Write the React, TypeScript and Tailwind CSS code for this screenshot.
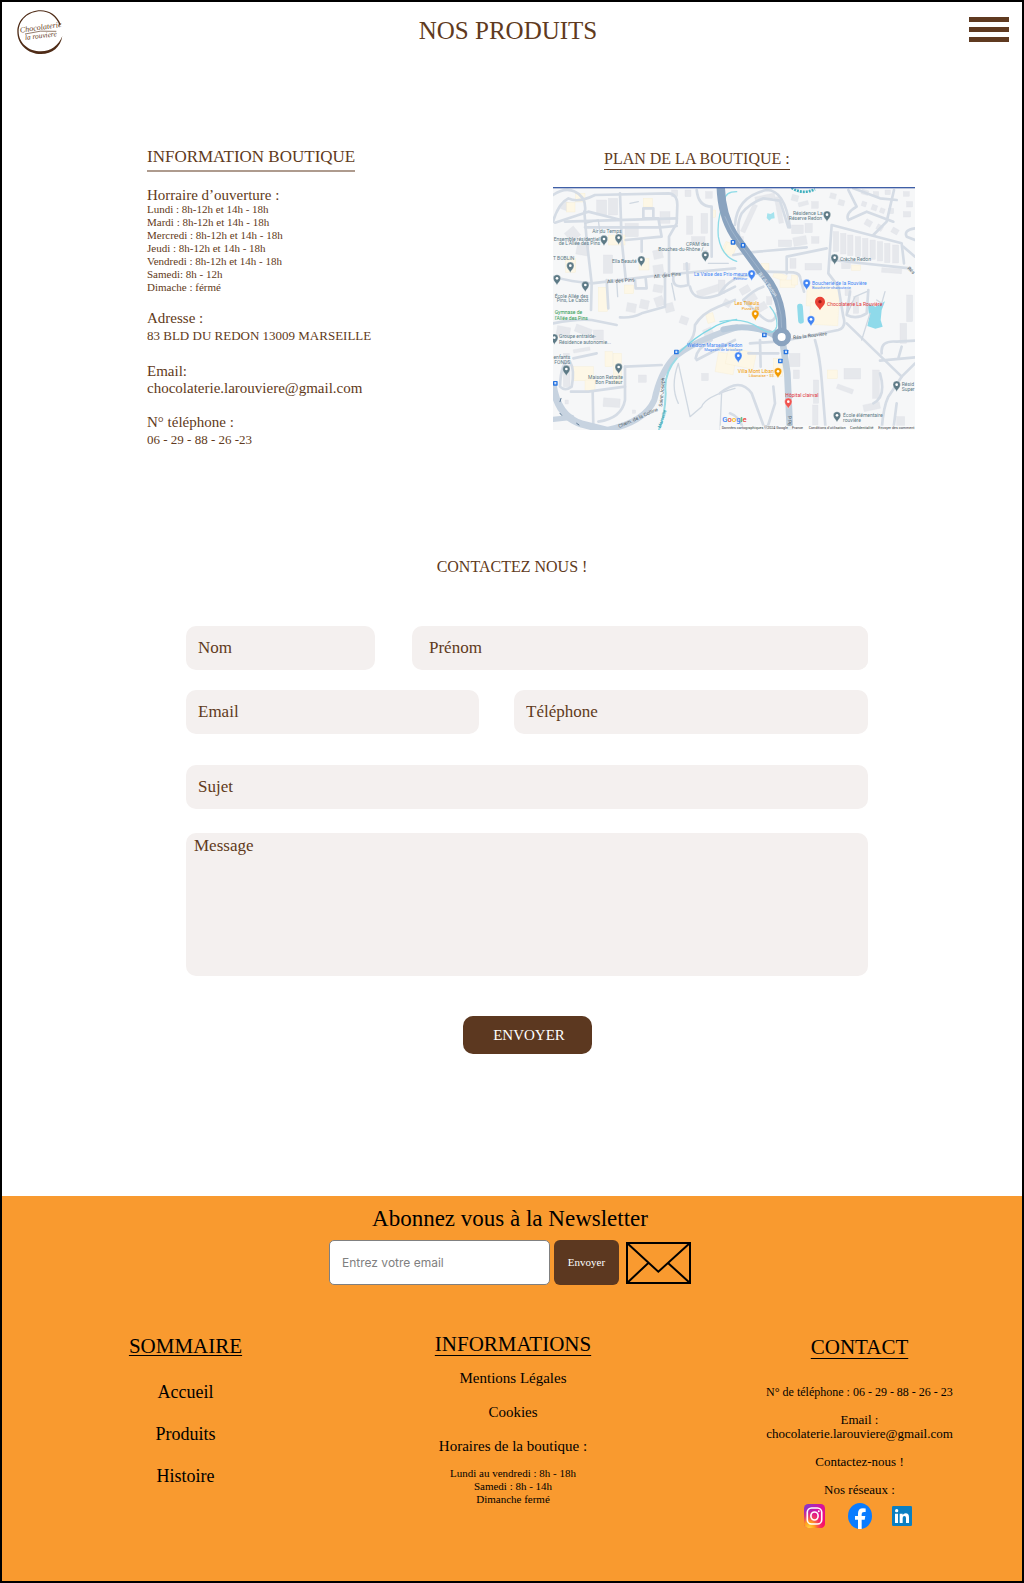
import React from 'react';

type Label = {
  x: number;
  y: number;
  t: string;
  c?: string;
  s?: number;
  a?: 'start' | 'middle' | 'end';
  r?: number;
};

type Box = [number, number, number, number, number?];

const GREY = '#5d7a86';
const BLUE = '#4285f4';
const ORANGE = '#f29900';
const RED = '#e0353a';
const ROAD = '#4d5b66';

const leftRoads = [
  'M24 245 Q40 190 70 175 Q100 190 150 165 L370 160 Q397 162 397 195 L395 250 L372 290 L372 400',
  'M24 165 Q60 140 90 155 Q125 170 120 215',
  'M30 248 L130 215 L228 240',
  'M118 215 L125 300 L140 430 L138 510',
  'M225 160 L230 300 L242 415',
  'M60 245 L395 235',
  'M120 262 L345 262 L395 258',
  'M242 300 L350 290 L340 235 L295 235 L295 205 L325 205 L325 235',
  'M290 300 L290 335',
  'M24 410 Q80 425 140 430 L350 405 Q460 395 570 385',
  'M185 420 L190 505',
  'M270 420 L272 445 L305 445 L302 415',
  'M360 400 L360 500 L290 520 Q260 535 225 532',
  'M24 550 Q100 535 140 540 L215 555',
  'M385 410 Q380 450 430 435 L425 370',
  'M455 150 Q460 200 500 200 L500 350',
  'M435 440 Q445 490 520 465 L570 440',
  'M430 610 Q450 590 450 555 Q470 520 520 500 L570 480',
  'M240 680 L350 675',
  'M240 680 L240 780 Q230 835 160 845',
  'M143 755 L145 860',
  'M78 755 L130 755 L240 740',
  'M80 740 Q90 690 75 665 Q48 660 45 740 Q60 755 80 740',
  'M85 655 L155 640',
  'M455 660 L570 600',
  'M452 655 Q455 625 500 600',
];

const leftThin = [
  'M400 670 Q375 740 400 790 M400 670 L435 830 L470 800 Q480 770 570 745',
  'M525 869 L530 755 M380 430 L390 480 M490 370 L550 370 M215 420 L218 470',
  'M255 190 L280 185 M120 250 L160 240 L165 280',
];

const rightRoads = [
  'M10 345 L60 337 L230 322',
  'M170 400 L170 350 L290 325',
  'M100 395 L190 397 Q212 400 212 420 L222 455',
  'M175 600 L325 570 Q350 562 340 530 L325 440 L295 400 L305 255 L515 310 L522 370',
  'M305 360 L540 385',
  'M520 320 L555 350',
  'M350 550 L515 710 L555 670',
  'M515 710 L475 770 Q460 800 455 869',
  'M255 600 Q270 650 275 720 L287 869',
  'M355 150 L380 200 Q345 220 355 240 L410 215 L490 245',
  'M492 150 L470 245 L430 285',
  'M370 145 L450 175 L500 180',
  'M15 255 Q20 170 110 150 Q165 150 180 262',
  'M45 335 Q10 270 35 220 Q60 190 100 175 L150 182 L175 262',
  'M100 440 Q70 450 40 480 L95 530 Q130 560 140 520',
  'M-30 460 Q0 410 60 405 L100 395',
  'M60 610 L140 605 M55 640 L145 640 M90 600 L92 680',
  'M-30 760 Q30 710 65 760 L105 869',
  'M0 820 Q30 830 40 869 M110 870 L135 790 L130 740',
  'M455 640 Q450 600 500 605 L555 602 M450 662 L555 652 M505 655 L515 620',
  'M360 455 L350 525 Q380 540 410 520 L415 450',
  'M555 265 Q520 270 530 290 L555 300',
  'M430 790 Q470 770 450 700 M500 790 L490 869',
];

const leftBuildings: Box[] = [
  [50, 185, 22, 25, 20], [155, 180, 30, 45], [190, 175, 28, 50], [65, 265, 35, 35, -40], [240, 250, 40, 40],
  [175, 345, 28, 55], [95, 310, 35, 35, 10], [325, 330, 28, 26, -12], [325, 375, 30, 26, -8], [425, 228, 18, 55],
  [468, 220, 20, 60], [440, 290, 40, 22], [380, 150, 18, 20], [420, 150, 18, 20], [482, 155, 20, 20],
  [245, 490, 28, 26, 10], [285, 480, 26, 26, 12], [330, 470, 26, 28, -20], [325, 435, 28, 22, 10], [360, 490, 26, 26, -15],
  [405, 530, 24, 22, 20], [475, 565, 28, 20, -25], [535, 480, 22, 20, 30], [35, 560, 40, 28, 10], [90, 560, 50, 22, 20],
  [145, 570, 30, 30], [85, 625, 50, 10, -10], [55, 675, 20, 65], [175, 775, 50, 26, 4], [280, 705, 24, 22],
  [345, 215, 30, 35], [470, 700, 20, 22], [55, 640, 18, 12], [455, 440, 85, 20, -18], [520, 420, 20, 40],
  [60, 780, 10, 12], [262, 810, 10, 10], [415, 370, 20, 20],
];

const leftShops: Box[] = [
  [92, 160, 28, 26], [65, 188, 25, 28], [295, 175, 27, 26], [190, 285, 50, 30], [62, 355, 30, 42], [282, 355, 30, 35],
  [160, 442, 28, 72], [238, 435, 28, 26], [180, 635, 22, 45], [205, 640, 24, 90], [85, 680, 60, 42], [120, 720, 30, 32],
  [485, 520, 22, 28, -15], [535, 310, 35, 30, 25], [515, 640, 55, 60, 10], [500, 210, 12, 22],
];

const rightBuildings: Box[] = [
  [185, 165, 20, 18, 15], [205, 185, 30, 12, -15], [245, 185, 20, 20], [185, 255, 35, 26], [225, 250, 22, 28], [145, 300, 40, 20],
  [190, 290, 40, 26, -10], [245, 290, 22, 20], [310, 275, 16, 60], [332, 280, 16, 62], [353, 285, 16, 62], [376, 290, 16, 60],
  [398, 295, 16, 60], [420, 300, 16, 58], [442, 305, 16, 58], [464, 310, 16, 58], [488, 315, 18, 54],
  [300, 160, 18, 16, 15], [325, 180, 18, 16, 15], [395, 150, 20, 14, 15], [430, 155, 16, 14], [465, 150, 16, 14], [520, 155, 18, 14],
  [395, 185, 14, 14, 20], [425, 195, 16, 16, 20], [450, 205, 14, 14, 20], [405, 240, 20, 18, 30], [440, 255, 18, 16, 30],
  [485, 265, 20, 16, 30], [520, 215, 22, 16], [530, 185, 18, 16], [475, 205, 16, 16], [70, 370, 20, 22], [30, 440, 30, 20, -30],
  [50, 465, 30, 20, -30], [80, 490, 30, 22, -30], [110, 470, 16, 24], [225, 370, 50, 20], [180, 355, 18, 30], [345, 445, 18, 22],
  [370, 470, 16, 50], [178, 640, 32, 40], [190, 690, 18, 26], [250, 720, 16, 70], [248, 795, 16, 60], [342, 685, 50, 32],
  [320, 740, 50, 14, 20], [428, 690, 20, 85], [400, 790, 50, 20, -12], [530, 465, 18, 80], [510, 550, 20, 60], [335, 370, 26, 16],
  [500, 830, 24, 30], [455, 385, 60, 14, 4], [20, 290, 20, 30], [50, 190, 14, 90, 25], [75, 165, 60, 14, -12], [140, 170, 14, 80, -10],
];

const rightShops: Box[] = [
  [230, 440, 98, 60, 3], [240, 490, 85, 65, 3], [130, 400, 40, 18, 20], [150, 420, 45, 22], [185, 405, 18, 30],
  [365, 375, 27, 16], [95, 370, 22, 20], [130, 655, 28, 55], [292, 690, 30, 26], [-10, 630, 85, 50, 12], [-15, 310, 30, 35, 20],
];

const leftPins: [number, number, string][] = [
  [177, 300, GREY], [221, 296, GREY], [76, 380, GREY], [289, 362, GREY], [481, 348, GREY], [36, 418, GREY],
  [121, 438, GREY], [28, 596, GREY], [64, 690, GREY], [221, 684, GREY],
];
const rightPins: [number, number, string][] = [
  [291, 227, GREY], [314, 356, GREY], [500, 737, GREY], [321, 829, GREY], [65, 404, BLUE], [230, 432, BLUE],
  [243, 541, BLUE], [25, 650, BLUE], [76, 524, ORANGE], [144, 697, ORANGE], [175, 788, '#f0534f'],
];

const leftStops: [number, number][] = [[394, 636], [31, 730]];
const rightStops: [number, number][] = [[9, 307], [39, 316], [103, 585], [168, 636], [151, 663]];

const leftLabels: Label[] = [
  { x: 186, y: 279, t: 'Air du Temps', a: 'middle' },
  { x: 26, y: 302, t: 'Ensemble résidentiel' },
  { x: 165, y: 316, t: 'de L’Allée des Pins', a: 'end' },
  { x: 88, y: 361, t: 'T BOBLIN', a: 'end' },
  { x: 275, y: 369, t: 'Ella Beauté', a: 'end' },
  { x: 492, y: 318, t: 'CPAM des', a: 'end' },
  { x: 487, y: 332, t: 'Bouches-du-Rhône /...', a: 'end' },
  { x: 29, y: 473, t: 'École Allée des' },
  { x: 35, y: 487, t: 'Pins, Le Cabot' },
  { x: 29, y: 522, t: 'Gymnase de', c: '#2e9b4f' },
  { x: 29, y: 539, t: 'l’Allée des Pins', c: '#2e9b4f' },
  { x: 42, y: 595, t: 'Groupe entraide-' },
  { x: 42, y: 611, t: 'Résidence autonomie...' },
  { x: 76, y: 658, t: 'enfants', a: 'end' },
  { x: 76, y: 672, t: 'FONDS', a: 'end' },
  { x: 234, y: 718, t: 'Maison Retraite', a: 'end' },
  { x: 232, y: 732, t: 'Bon Pasteur', a: 'end' },
  { x: 187, y: 430, t: 'All. des Pins', c: ROAD, r: -4 },
  { x: 327, y: 415, t: 'All. des Pins', c: ROAD, r: -6 },
  { x: 223, y: 864, t: 'Chem. de la Colline', c: ROAD, r: -24 },
  { x: 352, y: 800, t: 'Saint-Joseph', c: ROAD, r: -85 },
  { x: 347, y: 865, t: 'Marseille', c: '#2499ab', r: -72, s: 14 },
];

const rightLabels: Label[] = [
  { x: 52, y: 408, t: 'La Valse des Prix-meurs', c: BLUE, a: 'end' },
  { x: 52, y: 421, t: 'Primeur', c: BLUE, a: 'end', s: 12 },
  { x: 278, y: 226, t: 'Résidence La', a: 'end' },
  { x: 276, y: 241, t: 'Réserve Redon', a: 'end' },
  { x: 330, y: 363, t: 'Crèche Redon' },
  { x: 246, y: 434, t: 'Boucherie de la Rouvière', c: BLUE },
  { x: 246, y: 447, t: 'Boucherie-charcuterie', c: BLUE, s: 12 },
  { x: 291, y: 498, t: 'Chocolaterie La Rouvière', c: RED },
  { x: 88, y: 496, t: 'Les Tilleuls', c: ORANGE, a: 'end' },
  { x: 88, y: 509, t: 'Pizza • $$', c: ORANGE, a: 'end', s: 12 },
  { x: 37, y: 620, t: 'Weldom Marseille Redon', c: BLUE, a: 'end' },
  { x: 37, y: 632, t: 'Magasin de bricolage', c: BLUE, a: 'end', s: 12 },
  { x: 131, y: 700, t: 'Villa Mont Liban', c: ORANGE, a: 'end' },
  { x: 131, y: 712, t: 'Libanaise • $$', c: ORANGE, a: 'end', s: 12 },
  { x: 166, y: 771, t: 'Hôpital clairval', c: RED },
  { x: 339, y: 830, t: 'École élémentaire' },
  { x: 339, y: 845, t: 'rouvière' },
  { x: 515, y: 739, t: 'Résid' },
  { x: 515, y: 752, t: 'Super' },
  { x: 190, y: 598, t: 'Rés la Rouvière', c: ROAD, r: -7 },
  { x: 84, y: 402, t: 'Bd du Redon', c: '#eef3f8', r: 54 },
  { x: 184, y: 858, t: 'Bd d', c: ROAD, r: -88 },
  { x: 531, y: 386, t: 'Rés', c: ROAD, r: 44 },
];

function Boxes({ items, fill, stroke }: { items: Box[]; fill: string; stroke: string }) {
  return (
    <g fill={fill} stroke={stroke} strokeWidth="1">
      {items.map(([x, y, w, h, r], i) => (
        <rect key={i} x={x} y={y} width={w} height={h} transform={r ? `rotate(${r} ${x + w / 2} ${y + h / 2})` : undefined} />
      ))}
    </g>
  );
}

function Pins({ items }: { items: [number, number, string][] }) {
  return (
    <>
      {items.map(([x, y, c], i) => (
        <g key={i} transform={`translate(${x} ${y})`}>
          <path d="M0 18 C-2 11 -11 6 -11 -3 A11 11 0 0 1 11 -3 C11 6 2 11 0 18Z" fill={c} stroke="#fff" strokeWidth="1" />
          <circle cy="-3" r="4" fill="#fff" />
        </g>
      ))}
    </>
  );
}

function Stops({ items }: { items: [number, number][] }) {
  return (
    <>
      {items.map(([x, y], i) => (
        <g key={i}>
          <rect x={x - 7} y={y - 7} width="14" height="14" rx="2" fill="#2573e0" />
          <rect x={x - 3} y={y - 4} width="6" height="7" fill="#cfe1fb" />
        </g>
      ))}
    </>
  );
}

function Labels({ items }: { items: Label[] }) {
  return (
    <>
      {items.map((l) => (
        <text
          key={`${l.t}-${l.x}`}
          x={l.x}
          y={l.y}
          fontSize={l.s ?? 15}
          fill={l.c ?? GREY}
          textAnchor={l.a ?? 'start'}
          transform={l.r ? `rotate(${l.r} ${l.x} ${l.y})` : undefined}
        >
          {l.t}
        </text>
      ))}
    </>
  );
}

function ShopMap() {
  return (
    <svg viewBox="0 0 1086 729" className="mt-[17px] block h-auto w-full" fontFamily="Roboto, sans-serif" role="img" aria-label="Plan de la boutique">
      <rect width="1086" height="729" fill="#f6f7f8" />
      <g transform="translate(-24 -141)">
        <Boxes items={leftBuildings} fill="#e6e8ec" stroke="#dfe2e8" />
        <Boxes items={leftShops} fill="#fdf7e6" stroke="#f6ecd0" />
      </g>
      <g transform="translate(531 -141)">
        <Boxes items={rightBuildings} fill="#e6e8ec" stroke="#dfe2e8" />
        <Boxes items={rightShops} fill="#fdf7e6" stroke="#f6ecd0" />
        <path d="M112 220 L122 222 L132 216 L134 235 L124 236 L118 242 L110 234Z" fill="#a5e3ee" />
        <path d="M412 490 L436 500 L465 484 L455 510 L452 540 L458 560 L436 566 L412 558 L418 530Z" fill="#8fdaea" />
        <rect x="203" y="491" width="17" height="60" rx="8" fill="#8fdaea" transform="rotate(-4 211 521)" />
        <path d="M185 143 Q215 165 255 148" fill="none" stroke="#3fb0bf" strokeWidth="8" strokeDasharray="6 3" />
      </g>
      <g transform="translate(-24 -141)" fill="none" strokeLinecap="round" strokeLinejoin="round">
        {leftRoads.map((d) => (
          <path key={d} d={d} stroke="#d5dce5" strokeWidth="8" />
        ))}
        {leftThin.map((d) => (
          <path key={d} d={d} stroke="#d0d8e1" strokeWidth="4" />
        ))}
      </g>
      <g transform="translate(531 -141)" fill="none" strokeLinecap="round" strokeLinejoin="round">
        {rightRoads.map((d) => (
          <path key={d} d={d} stroke="#d5dce5" strokeWidth="8" />
        ))}
        <path d="M350 525 L375 470 L410 455 M465 455 L455 490 L440 480 M420 520 L395 600" stroke="#d0d8e1" strokeWidth="4" />
      </g>
      <g transform="translate(-24 -141)" fill="none" strokeLinecap="round" strokeLinejoin="round">
        <path d="M24 735 Q38 830 110 852 L200 875" stroke="#c7d3e0" strokeWidth="22" />
        <path d="M24 838 L80 832" stroke="#c7d3e0" strokeWidth="16" />
        <path d="M190 869 Q300 845 328 780 Q345 700 385 655 Q440 605 575 562" stroke="#c7d3e0" strokeWidth="18" />
        <path d="M395 655 Q355 700 362 760 Q360 830 342 869" stroke="#9adbe5" strokeWidth="6" />
        <path d="M400 640 Q450 590 500 565 Q530 545 575 538" stroke="#7dd6e4" strokeWidth="4" />
        <path d="M575 155 Q540 155 540 180 Q515 230 520 290 Q530 350 575 364" stroke="#8edbe7" strokeWidth="4" />
        <path d="M45 785 L48 775 M45 820 L50 826 M95 850 L102 855" stroke="#5d7a96" strokeWidth="3" />
      </g>
      <g transform="translate(531 -141)" fill="none" strokeLinecap="round" strokeLinejoin="round">
        <path d="M-20 568 Q70 548 140 590" stroke="#b9cadb" strokeWidth="18" />
        <path d="M-30 545 Q40 530 90 565 Q130 590 140 560 Q145 530 120 500" stroke="#8edbe7" strokeWidth="4" />
        <path d="M157 600 L172 700 L180 875" stroke="#c0cfdd" strokeWidth="20" />
        <path d="M-28 136 Q-26 225 12 285 L90 392 Q165 470 156 590" stroke="#8aa3bf" strokeWidth="25" />
        <path d="M-15 230 Q0 270 30 310 L100 405 Q158 480 155 565" stroke="#a9bdd2" strokeWidth="2" />
        <circle cx="155" cy="591" r="20" fill="#fff" stroke="#8aa3bf" strokeWidth="16" />
      </g>
      <g transform="translate(-24 -141)">
        <Stops items={leftStops} />
        <Pins items={leftPins} />
        <Labels items={leftLabels} />
      </g>
      <g transform="translate(531 -141)">
        <Stops items={rightStops} />
        <Pins items={rightPins} />
        <path d="M270 511 C267 502 255 496 255 485 A15 15 0 0 1 285 485 C285 496 273 502 270 511Z" fill="#e94235" />
        <circle cx="270" cy="485" r="5" fill="#a01c18" />
        <Labels items={rightLabels} />
      </g>
      <rect x="500" y="716" width="586" height="13" fill="#fbfbfb" opacity="0.8" />
      <g fontSize="11" fill="#33383d">
        <text x="506" y="726">Données cartographiques ©2024 Google</text>
        <text x="717" y="726">France</text>
        <text x="767" y="726">Conditions d'utilisation</text>
        <text x="891" y="726">Confidentialité</text>
        <text x="976" y="726">Envoyer des comment</text>
      </g>
      <text x="508" y="704" fontSize="23" fontWeight="500">
        <tspan fill="#4285f4">G</tspan>
        <tspan fill="#ea4335">o</tspan>
        <tspan fill="#fbbc05">o</tspan>
        <tspan fill="#4285f4">g</tspan>
        <tspan fill="#34a853">l</tspan>
        <tspan fill="#ea4335">e</tspan>
      </text>
      <rect width="1086" height="4" fill="#3f5fa6" />
    </svg>
  );
}

function Logo() {
  return (
    <svg viewBox="50 29 138 135" className="h-[45px] w-[46px]" role="img" aria-label="Chocolaterie la rouvière">
      <path
        d="M181 72 C170 44 147 30 121 30 C82 30 51 58 51 94 C51 131 82 161 122 161 C156 161 181 140 186 107 C174 136 152 153 122 153 C85 153 55 128 55 94 C55 60 84 33 121 33 C146 33 168 48 178 76Z"
        fill="#4f2c17"
      />
      <g fill="#5f3a20" fontFamily="'Liberation Serif', serif" fontStyle="italic">
        <text x="60" y="97" fontSize="24" transform="rotate(-8 60 97)">Chocolaterie</text>
        <text x="75" y="119" fontSize="22" transform="rotate(-7 75 119)">la rouviere</text>
      </g>
      <path d="M74 101 Q120 88 168 93" fill="none" stroke="#5f3a20" strokeWidth="2" />
    </svg>
  );
}

function Envelope() {
  return (
    <svg viewBox="0 0 195 126" className="ml-[7px] h-[42px] w-[65px]" fill="none" stroke="#000" strokeWidth="6" aria-hidden="true">
      <rect x="3" y="3" width="189" height="120" />
      <path d="M4 4 L97 89 L191 4 M67 63 L4 122 M126 63 L191 122" />
    </svg>
  );
}

function Instagram() {
  return (
    <svg viewBox="0 0 64 72" className="h-6 w-[21px]" preserveAspectRatio="none" aria-hidden="true">
      <defs>
        <linearGradient id="ig-base" x1="0" y1="0" x2="1" y2="1">
          <stop offset="0" stopColor="#7a3fd0" />
          <stop offset="0.45" stopColor="#d6129f" />
          <stop offset="1" stopColor="#ff0a62" />
        </linearGradient>
        <radialGradient id="ig-glow" cx="0.25" cy="1" r="0.75">
          <stop offset="0" stopColor="#ffd23c" />
          <stop offset="0.35" stopColor="#ff9d1e" />
          <stop offset="1" stopColor="#ff1f5a" stopOpacity="0" />
        </radialGradient>
      </defs>
      <rect width="64" height="72" rx="13" fill="url(#ig-base)" />
      <rect width="64" height="72" rx="13" fill="url(#ig-glow)" />
      <rect x="10" y="12" width="44" height="48" rx="13" fill="none" stroke="#fff" strokeWidth="5" />
      <ellipse cx="32" cy="36" rx="11" ry="12" fill="none" stroke="#fff" strokeWidth="5" />
      <circle cx="45" cy="22" r="3" fill="#fff" />
    </svg>
  );
}

function Facebook() {
  return (
    <svg viewBox="0 0 72 76" className="h-[26px] w-6" preserveAspectRatio="none" aria-hidden="true">
      <ellipse cx="36" cy="38" rx="36" ry="38" fill="#0a7cff" />
      <path d="M30 76 V49 H21 V38 H30 V30 Q30 15 45 15 L53 16 V26 H48 Q41 26 41 32 V38 H52 L50 49 H41 V76Z" fill="#fff" />
    </svg>
  );
}

function LinkedIn() {
  return (
    <svg viewBox="0 0 60 60" className="size-5" aria-hidden="true">
      <rect width="60" height="60" rx="4" fill="#0a7fc2" />
      <circle cx="14" cy="14" r="5" fill="#fff" />
      <path
        d="M9 23 H18 V51 H9Z M23 23 H32 V27 Q35 22 41 22 Q51 22 51 34 V51 H42 V36 Q42 30 37 30 Q32 30 32 36 V51 H23Z"
        fill="#fff"
      />
    </svg>
  );
}

const hours = [
  'Lundi : 8h-12h et 14h - 18h',
  'Mardi : 8h-12h et 14h - 18h',
  'Mercredi : 8h-12h et 14h - 18h',
  'Jeudi : 8h-12h et 14h - 18h',
  'Vendredi : 8h-12h et 14h - 18h',
  'Samedi: 8h - 12h',
  'Dimache : férmé',
];

const field =
  'block h-11 w-full min-w-0 rounded-[10px] bg-[#f4f0ef] px-3 text-[17px] text-[#5f3a20] placeholder:text-[#5f3a20] placeholder:opacity-100';

export default function App() {
  return (
    <div className="flex min-h-screen flex-col border-2 border-black bg-white font-['Liberation_Serif',serif] text-[#5f3a20]">
      <header className="flex items-start justify-between pt-2 pr-[13px] pb-[7px] pl-[15px]">
        <a href="#accueil">
          <Logo />
        </a>
        <h1 className="pr-4 text-[25px] leading-[42px]">NOS PRODUITS</h1>
        <button type="button" aria-label="Menu" className="mt-[7px] flex w-10 flex-col gap-[5px]">
          <span className="h-[5px] w-full bg-[#5f3a20]" />
          <span className="h-[5px] w-full bg-[#5f3a20]" />
          <span className="h-[5px] w-full bg-[#5f3a20]" />
        </button>
      </header>

      <main>
        <section className="grid grid-cols-[406fr_362fr] pt-[82px] pr-[107px] pl-[145px]">
          <div className="text-[15px] leading-[17px]">
            <h2 className="w-fit border-b-2 border-[#ae9b8e] text-[17px] leading-[26px]">INFORMATION BOUTIQUE</h2>
            <h3 className="mt-[15px] leading-4">Horraire d’ouverture :</h3>
            <ul className="text-[11px] leading-[13px]">
              {hours.map((h) => (
                <li key={h}>{h}</li>
              ))}
            </ul>
            <h3 className="mt-4">Adresse :</h3>
            <p className="text-[13px] leading-[17px]">83 BLD DU REDON 13009 MARSEILLE</p>
            <h3 className="mt-[19px]">Email:</h3>
            <p>chocolaterie.larouviere@gmail.com</p>
            <h3 className="mt-[17px]">N° téléphone :</h3>
            <p className="text-[13px] leading-[17px]">06 - 29 - 88 - 26 -23</p>
          </div>
          <div className="pt-[5px]">
            <h2 className="ml-[51px] w-fit border-b border-[#5f3a20] text-[16px] leading-5">PLAN DE LA BOUTIQUE :</h2>
            <ShopMap />
          </div>
        </section>

        <section>
          <h2 className="mt-[107px] text-center text-[16px] leading-6">CONTACTEZ NOUS !</h2>
          <form className="mt-[47px] pr-[154px] pl-[184px]" onSubmit={(e) => e.preventDefault()}>
            <div className="grid grid-cols-[189fr_456fr] gap-x-[37px]">
              <input className={field} aria-label="Nom" placeholder="Nom" />
              <div className="rounded-[10px] bg-[#f4f0ef] pl-[5px]">
                <input className={field} aria-label="Prénom" placeholder="Prénom" />
              </div>
            </div>
            <div className="mt-5 grid grid-cols-[293fr_354fr] gap-x-[35px]">
              <input type="email" className={field} aria-label="Email" placeholder="Email" />
              <input type="tel" className={field} aria-label="Téléphone" placeholder="Téléphone" />
            </div>
            <input className={`${field} mt-[31px]`} aria-label="Sujet" placeholder="Sujet" />
            <textarea
              aria-label="Message"
              placeholder="Message"
              className="mt-6 block h-[143px] w-full resize-none rounded-[10px] bg-[#f4f0ef] px-2 py-[3px] text-[17px] leading-5 text-[#5f3a20] placeholder:text-[#5f3a20] placeholder:opacity-100"
            />
            <button type="submit" className="mx-auto mt-10 block h-[38px] w-[129px] rounded-[10px] bg-[#5c3820] pl-1 text-[15px] text-white">
              ENVOYER
            </button>
          </form>
        </section>
      </main>

      <footer className="mt-[142px] grow bg-[#f99a2f] pt-[9px] pb-[52px] text-black">
        <div className="pr-1">
          <h2 className="text-center text-[23px] leading-7">Abonnez vous à la Newsletter</h2>
          <form className="mt-[7px] flex items-center justify-center" onSubmit={(e) => e.preventDefault()}>
            <input
              type="email"
              aria-label="Entrez votre email"
              placeholder="Entrez votre email"
              className="h-[45px] w-[221px] rounded-[5px] border border-[#808080] bg-white px-3 font-['Inter',sans-serif] text-[12px] placeholder:text-[#808080] placeholder:opacity-100"
            />
            <button type="submit" className="ml-1 h-[45px] w-[65px] rounded-[6px] bg-[#5c3820] text-[11px] text-white">
              Envoyer
            </button>
            <Envelope />
          </form>
        </div>

        <div className="mt-[47px] grid grid-cols-[367fr_288fr_365fr] text-center">
          <nav className="pt-0.5" aria-label="Sommaire">
            <h2 className="text-[21px] leading-6 underline decoration-1 underline-offset-2">SOMMAIRE</h2>
            <ul className="mt-[13px] text-[18px] leading-[42px]">
              <li><a href="#accueil">Accueil</a></li>
              <li><a href="#produits">Produits</a></li>
              <li><a href="#histoire">Histoire</a></li>
            </ul>
          </nav>
          <div>
            <h2 className="text-[21px] leading-6 underline decoration-1 underline-offset-4">INFORMATIONS</h2>
            <ul className="mt-[5px] text-[15px] leading-[34px]">
              <li><a href="#mentions">Mentions Légales</a></li>
              <li><a href="#cookies">Cookies</a></li>
              <li>Horaires de la boutique :</li>
            </ul>
            <p className="mt-1 text-[11px] leading-[13px]">
              Lundi au vendredi : 8h - 18h
              <br />
              Samedi : 8h - 14h
              <br />
              Dimanche fermé
            </p>
          </div>
          <div className="pt-[3px] pl-10 text-[13px] leading-[14px]">
            <h2 className="text-[21px] leading-6 underline decoration-1 underline-offset-4">CONTACT</h2>
            <p className="mt-[26px] text-[12px] leading-[14px]">N° de téléphone : 06 - 29 - 88 - 26 - 23</p>
            <p className="mt-[14px]">
              Email :
              <br />
              chocolaterie.larouviere@gmail.com
            </p>
            <p className="mt-[14px]"><a href="#contact">Contactez-nous !</a></p>
            <p className="mt-[14px]">Nos réseaux :</p>
            <div className="mt-1.5 flex items-center justify-center pr-1">
              <a href="#instagram" aria-label="Instagram"><Instagram /></a>
              <a href="#facebook" aria-label="Facebook" className="ml-[23px]"><Facebook /></a>
              <a href="#linkedin" aria-label="LinkedIn" className="ml-5"><LinkedIn /></a>
            </div>
          </div>
        </div>
      </footer>
    </div>
  );
}
